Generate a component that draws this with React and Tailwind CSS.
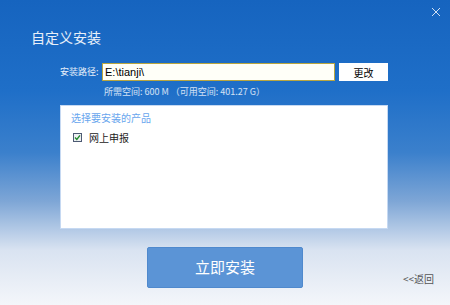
import React from "react";

const cjk = "font-['Microsoft_YaHei','Noto_Sans_CJK_SC',sans-serif]";

const App = () => {
  return (
    <div
      className={`relative w-[450px] h-[305px] overflow-hidden ${cjk} bg-[linear-gradient(180deg,#1664bf_0%,#1f6fc8_30%,#3b80cc_50%,#7ea6d6_66%,#d9e3f1_82%,#f4f6fa_100%)]`}
    >
      {/* 关闭 */}
      <button className="absolute top-[4px] right-[6px] w-[16px] h-[16px] flex items-center justify-center text-white/80">
        <svg width="10" height="10" viewBox="0 0 10 10" fill="none" stroke="currentColor" strokeWidth="1">
          <path d="M1 1L9 9M9 1L1 9" />
        </svg>
      </button>

      <h1 className="pt-[29px] pl-[31px] text-[14px] leading-[17px] text-white/90">自定义安装</h1>

      {/* 安装路径 */}
      <div className="flex items-center mt-[17px] pl-[60px]">
        <span className="w-[42px] shrink-0 text-[9px] text-white/90 whitespace-nowrap">安装路径:</span>
        <div className="w-[233px] h-[18px] border border-[#b9a640] bg-[#fffff8] flex items-center pl-[2px] text-[11px] text-black font-['Liberation_Sans',sans-serif]">
          E:\tianji\
        </div>
        <button className="ml-[4px] w-[49px] h-[18px] bg-white text-[10px] text-black flex items-center justify-center">
          更改
        </button>
      </div>

      <p className="mt-[5px] pl-[104px] text-[9px] leading-[11px] text-white/80 whitespace-nowrap">
        所需空间: 600 M （可用空间: 401.27 G）
      </p>

      {/* 产品列表 */}
      <div className="mt-[8px] ml-[60px] w-[328px] h-[124px] bg-white border border-[#c6d9f2] px-[10px] pt-[6px]">
        <p className="text-[10px] leading-[12px] text-[#68a6ee]">选择要安装的产品</p>
        <label className="flex items-center mt-[6px] ml-[2px]">
          <span className="w-[9px] h-[9px] border border-[#4d5a73] bg-[#eef0f3] flex items-center justify-center">
            <svg width="7" height="7" viewBox="0 0 7 7" fill="none" stroke="#1f8a2a" strokeWidth="1.4">
              <path d="M1 3.6L2.8 5.4L6 1.4" />
            </svg>
          </span>
          <span className="ml-[7px] text-[10px] text-[#222]">网上申报</span>
        </label>
      </div>

      {/* 底部 */}
      <div className="flex items-end mt-[18px]">
        <button className="ml-[147px] w-[156px] h-[41px] bg-[#5b94d6] border border-[#4f89cd] rounded-[2px] text-white text-[15px] flex items-center justify-center">
          立即安装
        </button>
        <span className="ml-[100px] mb-[2px] text-[10px] text-[#555] whitespace-nowrap">&lt;&lt;返回</span>
      </div>
    </div>
  );
};

export default App;
